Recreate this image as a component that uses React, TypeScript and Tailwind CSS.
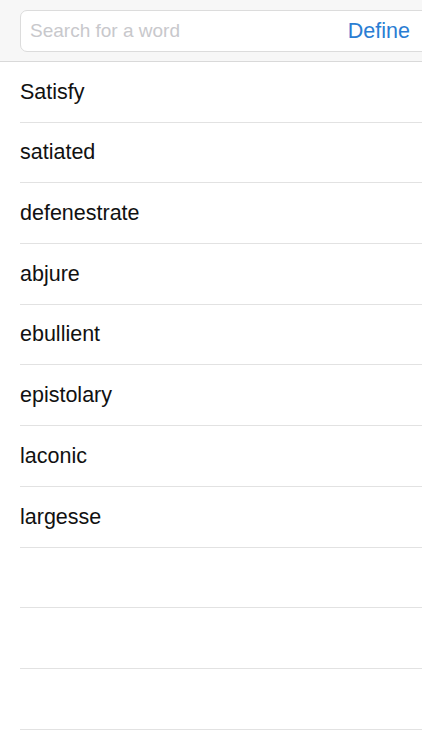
import React from 'react';

const words = [
  'Satisfy',
  'satiated',
  'defenestrate',
  'abjure',
  'ebullient',
  'epistolary',
  'laconic',
  'largesse',
  '',
  '',
  '',
];

export default function App() {
  return (
    <div className="w-[422px] h-[750px] overflow-hidden bg-white font-['Liberation_Sans',Arial,sans-serif]">
      {/* Search bar */}
      <header className="h-[62px] bg-[#f7f7f7] border-b border-[#d9d9d9] pt-[10px] pl-5 overflow-hidden">
        <div className="w-[420px] h-[42px] bg-white border border-[#dcdcdc] rounded-[7px] flex items-center justify-between pl-[9px] pr-[29px]">
          <span className="text-[19px] text-[#c8c8cc]">Search for a word</span>
          <span className="text-[21.5px] text-[#2a7dd3]">Define</span>
        </div>
      </header>

      {/* Word list */}
      <ul>
        {words.map((w, i) => (
          <li
            key={i}
            className="ml-5 h-[60.7px] border-b border-[#e2e2e2] flex items-center text-[21.5px] text-[#111]"
          >
            {w}
          </li>
        ))}
      </ul>
    </div>
  );
}
